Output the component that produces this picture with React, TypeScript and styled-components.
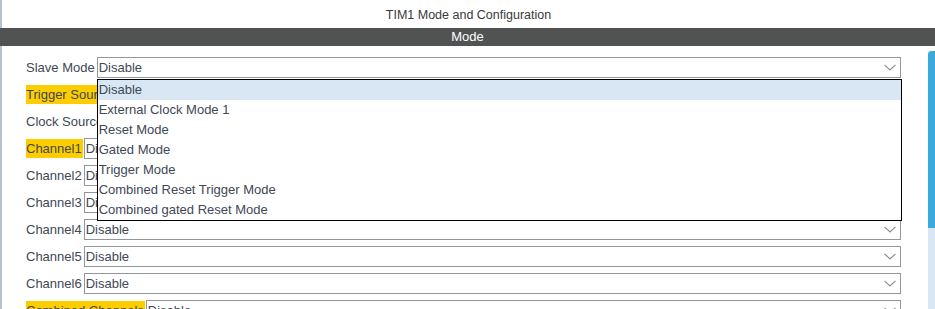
import React from "react";
import styled, { createGlobalStyle } from "styled-components";

const Global = createGlobalStyle`
  html, body { margin: 0; padding: 0; background: #ffffff; }
  body { width: 935px; height: 309px; overflow: hidden; font-family: "Liberation Sans", Arial, sans-serif; }
`;

const Page = styled.div`
  width: 935px;
  height: 309px;
  display: flex;
  flex-direction: column;
  overflow: hidden;
`;

const Title = styled.div`
  height: 28px;
  line-height: 30px;
  border-left: 2px solid #b8c4cc;
  text-align: center;
  font-size: 12.5px;
  color: #3a3a3a;
`;

const SectionBar = styled.div`
  height: 18px;
  line-height: 18px;
  background: #515352;
  color: #ffffff;
  text-align: center;
  font-size: 13px;
`;

const Body = styled.div`
  flex: 1;
  display: flex;
  border-left: 2px solid #b8c4cc;
  min-height: 0;
`;

const Form = styled.div`
  flex: 1;
  display: flex;
  flex-direction: column;
  gap: 6px;
  padding: 11px 27px 0 24px;
`;

const Row = styled.div<{ $top?: boolean }>`
  display: flex;
  align-items: center;
  height: 21px;
  flex-shrink: 0;
  gap: 1px;
  position: ${(p) => (p.$top ? "relative" : "static")};
  z-index: ${(p) => (p.$top ? 2 : "auto")};
`;

const Label = styled.span<{ $warn?: boolean }>`
  height: 19px;
  line-height: 19px;
  padding-right: 1px;
  font-size: 13px;
  color: #3e4856;
  white-space: nowrap;
  background: ${(p) => (p.$warn ? "#fdcd00" : "transparent")};
`;

const SelectWrap = styled.div`
  position: relative;
  flex: 1;
  height: 100%;
`;

const SelectBox = styled.div`
  box-sizing: border-box;
  height: 21px;
  border: 1px solid #93979b;
  display: flex;
  align-items: center;
  justify-content: space-between;
  padding: 0 4px 0 1px;
  font-size: 13px;
  color: #3e4856;
  background: #fff;
`;

const Menu = styled.ul`
  position: absolute;
  z-index: 5;
  top: 22px;
  left: 0;
  right: -1px;
  margin: 0;
  padding: 0;
  list-style: none;
  border: 1px solid #000;
  background: #fff;
`;

const MenuItem = styled.li<{ $active?: boolean }>`
  height: 20px;
  line-height: 20px;
  padding-left: 1px;
  font-size: 13px;
  color: #3e4856;
  background: ${(p) => (p.$active ? "#d9e7f4" : "#fff")};
`;

const ScrollTrack = styled.div`
  width: 7px;
  margin-top: 5px;
  background: #d9e7f4;
  display: flex;
  flex-direction: column;
`;

const ScrollThumb = styled.div`
  height: 177px;
  background: #3aa9dd;
  border-top-left-radius: 4px;
`;

const Chevron = () => (
  <svg width="12" height="7" viewBox="0 0 12 7">
    <path d="M0.5 0.8 L6 6 L11.5 0.8" fill="none" stroke="#8a8d90" strokeWidth="1.1" />
  </svg>
);

const Select: React.FC<{ value: string; options?: string[] }> = ({ value, options }) => (
  <SelectWrap>
    <SelectBox>
      <span>{value}</span>
      <Chevron />
    </SelectBox>
    {options && (
      <Menu>
        {options.map((o, i) => (
          <MenuItem key={o} $active={i === 0}>
            {o}
          </MenuItem>
        ))}
      </Menu>
    )}
  </SelectWrap>
);

const slaveOptions = [
  "Disable",
  "External Clock Mode 1",
  "Reset Mode",
  "Gated Mode",
  "Trigger Mode",
  "Combined Reset Trigger Mode",
  "Combined gated Reset Mode",
];

const rows: { label: string; warn?: boolean }[] = [
  { label: "Trigger Source", warn: true },
  { label: "Clock Source" },
  { label: "Channel1", warn: true },
  { label: "Channel2" },
  { label: "Channel3" },
  { label: "Channel4" },
  { label: "Channel5" },
  { label: "Channel6" },
  { label: "Combined Channels", warn: true },
];

export default function App() {
  return (
    <>
      <Global />
      <Page>
        <Title>TIM1 Mode and Configuration</Title>
        <SectionBar>Mode</SectionBar>
        <Body>
          <Form>
            <Row $top>
              <Label>Slave Mode</Label>
              <Select value="Disable" options={slaveOptions} />
            </Row>
            {rows.map((r) => (
              <Row key={r.label}>
                <Label $warn={r.warn}>{r.label}</Label>
                <Select value="Disable" />
              </Row>
            ))}
          </Form>
          <ScrollTrack>
            <ScrollThumb />
          </ScrollTrack>
        </Body>
      </Page>
    </>
  );
}
